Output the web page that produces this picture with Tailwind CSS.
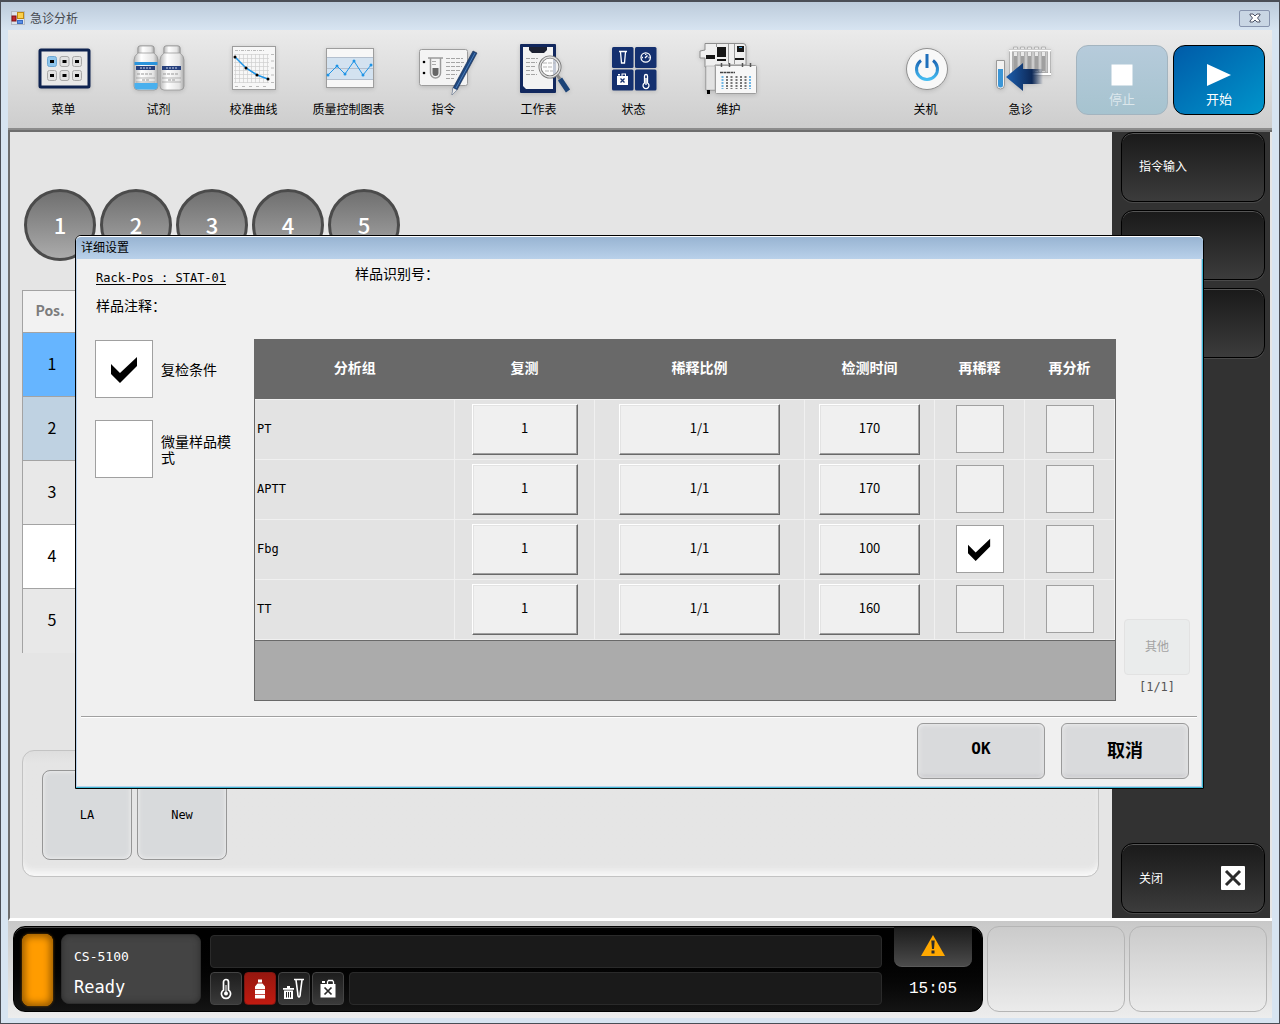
<!DOCTYPE html>
<html lang="zh-CN">
<head>
    <meta charset="UTF-8">
    <meta name="viewport" content="width=device-width, initial-scale=1.0">
    <title>急诊分析</title>
    <script src="https://cdn.jsdelivr.net/npm/@tailwindcss/browser@4"></script>
</head>
<body class="relative flex min-h-screen flex-col bg-[#d7e4f1] font-['Noto_Sans_CJK_SC',sans-serif] text-xs text-black">

    <!-- Title bar -->
    <header class="flex h-[30px] items-center border-x border-t-2 border-[#4a4e56] bg-linear-to-b from-[#bccbdb] to-[#d7e4f1] pt-1 pr-[9px] pl-[10px]">
        <svg class="mr-[5px] h-[14px] w-[14px]" viewBox="0 0 14 14">
            <rect x=".5" y=".5" width="13" height="13" fill="#dde3ea" stroke="#b3bac2"/>
            <rect x="1" y="5" width="4" height="5" fill="#c0272d" stroke="#7e1216"/>
            <rect x="6.500" y="1.500" width="6" height="6" fill="#fbd04a" stroke="#c08a10"/>
            <rect x="6.500" y="9.500" width="5" height="3" fill="#5a8fe8" stroke="#3b6cc0"/>
        </svg>
        <h1 class="text-[#44484e]">急诊分析</h1>
        <button type="button" aria-label="关闭窗口" class="ml-auto flex h-[17px] w-[31px] items-center justify-center rounded-xs border border-[#8794ae] bg-[#c9d6e4]">
            <svg class="h-[10px] w-[12px]" viewBox="0 0 12 10"><path d="M1 1h3l2 2 2-2h3v1L8.500 5 11 8v1H8L6 7 4 9H1V8l2.500-3L1 2z" fill="#fff" stroke="#4c5366"/></svg>
        </button>
    </header>

    <div class="flex flex-1 flex-col border-x border-b border-[#4a4e56] px-[7px] pb-[5px]">

        <!-- Toolbar -->
        <nav class="flex h-[100px] items-start border-b-2 border-[#8c8c8c] bg-linear-to-b from-[#ebebeb] to-[#cdcdcd] pr-[7px] pl-2 leading-[18px]">
            <button type="button" class="flex w-[95px] flex-col items-center pt-[10px]">
                <svg class="h-[60px] w-16 overflow-visible drop-shadow-sm" viewBox="0 0 64 60">
                    <rect x="8" y="10" width="49" height="37" rx="1" fill="#e9e9e9" stroke="#0e2350" stroke-width="3"/>
                    <g fill="#e2e2e2" stroke="#a9a9a9">
                        <rect x="15.500" y="16.500" width="9" height="10" rx="2" fill="#8ec5ec" stroke="#6da8d4"/>
                        <rect x="28" y="16.500" width="9" height="10" rx="2"/><rect x="40.500" y="16.500" width="9" height="10" rx="2"/>
                        <rect x="15.500" y="30.500" width="9" height="10" rx="2"/><rect x="28" y="30.500" width="9" height="10" rx="2"/><rect x="40.500" y="30.500" width="9" height="10" rx="2"/>
                    </g>
                    <path d="M18 20h4v3h-4zM30.500 20h4v3h-4zM43 20h4v3h-4zM18 34h4v3h-4zM30.500 34h4v3h-4zM43 34h4v3h-4z"/>
                </svg>
                <span>菜单</span>
            </button>
            <button type="button" class="flex w-[95px] flex-col items-center pt-[10px]">
                <svg class="h-[60px] w-16 overflow-visible drop-shadow-sm" viewBox="0 0 64 60">
                    <defs>
                        <linearGradient id="bottle"><stop offset="0" stop-color="#b8b8b8"/><stop offset=".3" stop-color="#fff"/><stop offset=".8" stop-color="#e4e4e4"/><stop offset="1" stop-color="#a8a8a8"/></linearGradient>
                    </defs>
                    <g fill="url(#bottle)" stroke="#8f8f8f" stroke-width=".7">
                        <path d="M11 13V8q0-2 2-2h12q2 0 2 2v5q4 3 4 7v26q0 4-4 4H11q-4 0-4-4V20q0-4 4-7z"/>
                        <path d="M11 8q0-2 2-2h12q2 0 2 2v5H11z"/>
                    </g>
                    <g transform="translate(26)" fill="url(#bottle)" stroke="#8f8f8f" stroke-width=".7">
                        <path d="M11 13V8q0-2 2-2h12q2 0 2 2v5q4 3 4 7v26q0 4-4 4H11q-4 0-4-4V20q0-4 4-7z"/>
                        <path d="M11 8q0-2 2-2h12q2 0 2 2v5H11z"/>
                    </g>
                    <path d="M7.500 22h23v3h-23z" fill="#2b94dc"/><path d="M7.500 43h23v3q0 3.500-3.500 3.500H11q-3.500 0-3.500-3.500z" fill="#49b0ee"/>
                    <path d="M9 26h19v4H9zM35 26h19v4H35z" fill="#27407c"/>
                    <path d="M13 28h11M39 28h11" stroke="#cdd6ec" stroke-dasharray="2 1"/>
                    <path d="M10 34h16M36 34h16M15 40h8M41 40h8" stroke="#999" stroke-dasharray="3 1"/><path d="M9 38h19M35 38h19M9 42h19M35 42h19" stroke="#8a8a8a" stroke-width=".6"/>
                </svg>
                <span>试剂</span>
            </button>
            <button type="button" class="flex w-[95px] flex-col items-center pt-[10px]">
                <svg class="h-[60px] w-16 overflow-visible drop-shadow-sm" viewBox="0 0 64 60">
                    <rect x="10.500" y="6.500" width="43" height="43" fill="#f7f7f7" stroke="#9d9d9d"/>
                    <path d="M13 10.500h30" stroke="#bbb" stroke-dasharray="3 1 1 1"/>
                    <path d="M13.500 14v29M17.500 14v29M21.500 14v29M25.500 14v29M29.500 14v29M33.500 14v29M37.500 14v29M41.500 14v29M45.500 14v29M12 14.500h35M12 18.500h35M12 22.500h35M12 26.500h35M12 30.500h35M12 34.500h35M12 38.500h35M12 42.500h35" stroke="#cfcfcf" stroke-width=".7"/>
                    <path d="M49 14.500h3M49 21h3M49 28h3M49 35h3M49 42.500h3M13 46.500h34" stroke="#bbb" stroke-dasharray="3 4"/>
                    <path d="M13 17 24 28 35 35 46 39" fill="none" stroke="#1f94e6" stroke-width="1.500"/>
                    <g><circle cx="13" cy="17" r="1.500"/><circle cx="24" cy="28" r="1.500"/><circle cx="35" cy="35" r="1.500"/><circle cx="46" cy="39" r="1.500"/></g>
                </svg>
                <span>校准曲线</span>
            </button>
            <button type="button" class="flex w-[95px] flex-col items-center pt-[10px]">
                <svg class="h-[60px] w-16 overflow-visible drop-shadow-sm" viewBox="0 0 64 60">
                    <rect x="9.500" y="8.500" width="47" height="39" fill="#f7f7f7" stroke="#9d9d9d"/>
                    <path d="M10 17h46v23H10z" fill="#d3e2f0"/><path d="M10 17.500h46M10 28.500h46M10 39.500h46" stroke="#b3bfce"/>
                    <path d="m11 35 9-9 8 8 9-13 9 14 8-10" fill="none" stroke="#1f94e6"/>
                    <g fill="#1f94e6"><circle cx="11" cy="35" r="1.500"/><circle cx="20" cy="26" r="1.500"/><circle cx="28" cy="34" r="1.500"/><circle cx="37" cy="21" r="1.500"/><circle cx="46" cy="35" r="1.500"/><circle cx="54" cy="25" r="1.500"/></g>
                </svg>
                <span>质量控制图表</span>
            </button>
            <button type="button" class="flex w-[95px] flex-col items-center pt-[10px]">
                <svg class="h-[60px] w-16 overflow-visible drop-shadow-sm" viewBox="0 0 64 60">
                    <rect x="7.500" y="9.500" width="48" height="36" rx="2" fill="#f4f4f4" stroke="#9d9d9d"/>
                    <circle cx="12" cy="22" r="1.300"/><circle cx="12" cy="33" r="1.300"/>
                    <path d="M16 18h15M18.500 18v15a5 5 0 0 0 10 0V18" fill="none" stroke="#9b9b9b" stroke-width="1.500"/>
                    <path d="M20.500 28h6v5a3 3 0 0 1-6 0z" fill="#666"/><path d="M20 21.500h4M20 24.500h4" stroke="#aaa"/>
                    <path d="M34 18.500h17M34 22.500h18M34 26.500h16M34 30.500h14M34 34.500h11M34 38.500h8" stroke="#a5a5a5" stroke-dasharray="4 1"/>
                    <path d="m61 11 4 2-20 37-5 5 1-7z" fill="#1e477f" stroke="#12294d" stroke-width=".6"/><path d="m41 48 4 2-5 5z" fill="#e8e8e8"/><path d="m63 13-19 35" stroke="#4d7eb8"/>
                </svg>
                <span>指令</span>
            </button>
            <button type="button" class="flex w-[95px] flex-col items-center pt-[10px]">
                <svg class="h-[60px] w-16 overflow-visible drop-shadow-sm" viewBox="0 0 64 60">
                    <rect x="13" y="4" width="36" height="49" rx="1" fill="#12285e"/>
                    <path d="M16 7h30v42H19l-3-3z" fill="#f3f3f3"/><path d="M22 7h18v3l-3 3H25l-3-3z" fill="#1d2233"/>
                    <path d="M19 18.500h12M19 22.500h11M19 26.500h10M19 30.500h8M19 34.500h11" stroke="#a5a5a5" stroke-dasharray="4 1"/>
                    <circle cx="43" cy="27" r="10" fill="#fff" fill-opacity=".75" stroke="#777" stroke-width="3"/><circle cx="43" cy="27" r="10" fill="none" stroke="#e0e0e0" stroke-width="1.300"/>
                    <path d="M36 23h12M36 27h10M38 31h8" stroke="#b5b5b5" stroke-dasharray="4 1"/>
                    <path d="m50 35 3 4" stroke="#888" stroke-width="3"/><path d="m53 39 8 12" stroke="#1c4478" stroke-width="5"/>
                </svg>
                <span>工作表</span>
            </button>
            <button type="button" class="flex w-[95px] flex-col items-center pt-[10px]">
                <svg class="h-[60px] w-16 overflow-visible drop-shadow-sm" viewBox="0 0 64 60">
                    <g fill="#14306f"><rect x="10" y="7" width="21.500" height="21" rx="1.500"/><rect x="33" y="7" width="21.500" height="21" rx="1.500"/><rect x="10" y="29.500" width="21.500" height="21" rx="1.500"/><rect x="33" y="29.500" width="21.500" height="21" rx="1.500"/></g>
                    <g fill="none" stroke="#fff" stroke-width="1.300">
                        <path d="M17 11.500h8M18.500 12l1 11h3l1-11"/><circle cx="43.700" cy="17.500" r="4.700"/><path d="m43 18 2.500-2.500M40 17.500h1M46.500 17.500h1M43.700 14v1"/>
                        <path d="M42.500 43v-7a1.500 1.500 0 0 1 3 0v7a3 3 0 1 1-3 0zM44 38v7"/>
                    </g>
                    <path d="M15 36h11v9H15zM16 34h2v1.500h-2zM19.500 36v-2.500H24V36h-1v-1.500h-2.500V36z" fill="#fff"/><path d="m18.500 38.500 4 4m0-4-4 4" stroke="#14306f" stroke-width="1.300"/>
                </svg>
                <span>状态</span>
            </button>
            <button type="button" class="flex w-[95px] flex-col items-center pt-[10px]">
                <svg class="h-[60px] w-16 overflow-visible drop-shadow-sm" viewBox="0 0 64 60">
                    <path d="M8 3.500h38q3 0 3 3V25H18v25H9V27H8V18H3v-7l5-1z" fill="#efefef" stroke="#8d8d8d"/>
                    <path d="M9 26h9v24H9z" fill="#e2e2e2" stroke="#999" stroke-width=".5"/><path d="M10 50h3v4h-3z"/>
                    <path d="M20 7h9v10h-9zM40 6h7v6h-7zM9 15h9v4H9zM20 19h9v2h-9zM38 18h9v2h-9z" fill="#161616"/><path d="M42 7.500h3" stroke="#4aa3dd"/><path d="M19.500 4v3M31.500 4v20M37.500 4v20" stroke="#999"/>
                    <rect x="18.500" y="25.500" width="41" height="28" rx="1" fill="#f7f7f7" stroke="#9d9d9d"/>
                    <path d="M24.500 23v4M32.500 23v4M45.500 23v4M53.500 23v4" stroke="#555" stroke-width="1.500"/>
                    <path d="M23 32.500h15" stroke="#444" stroke-width="1.500" stroke-dasharray="3 .5"/>
                    <path d="M25.500 36v13M53 36v13" stroke="#6db5e4" stroke-width="2" stroke-dasharray="2 1"/>
                    <path d="M30 36v13M34.500 36v13M39.500 36v13M44 36v13M48.500 36v13" stroke="#777" stroke-width="2" stroke-dasharray="2 1"/>
                </svg>
                <span>维护</span>
            </button>
            <button type="button" class="ml-auto flex w-[95px] flex-col items-center pt-[10px]">
                <svg class="h-[60px] w-16 overflow-visible drop-shadow-sm" viewBox="0 0 64 60">
                    <defs><linearGradient id="power" x2="0" y2="1"><stop offset="0" stop-color="#1b66b4"/><stop offset="1" stop-color="#45bdf2"/></linearGradient></defs>
                    <circle cx="33" cy="29" r="20.500" fill="#f8f8f8" stroke="#8f8f8f"/>
                    <path d="M27 20.500a10.500 10.500 0 1 0 12 0" fill="none" stroke="url(#power)" stroke-width="3"/><path d="M31.500 14h3v14h-3z" fill="#1f6fbb"/>
                </svg>
                <span>关机</span>
            </button>
            <button type="button" class="mr-2 flex w-[95px] flex-col items-center pt-[10px]">
                <svg class="h-[60px] w-16 overflow-visible drop-shadow-sm" viewBox="0 0 64 60">
                    <defs><linearGradient id="arrow"><stop offset="0" stop-color="#1d5fae"/><stop offset=".7" stop-color="#0d2958"/><stop offset="1" stop-color="#0d2958" stop-opacity="0"/></linearGradient></defs>
                    <g fill="#e9e9e9" stroke="#a0a0a0" stroke-width=".7"><path d="M24.500 7h4v25h-4zM31.500 7h4v25h-4zM38.500 7h4v25h-4zM45.500 7h4v25h-4zM52.500 7h4v25h-4z"/></g>
                    <path d="M25 16h3v15h-3zM32 16h3v15h-3zM39 16h3v15h-3zM46 16h3v15h-3zM53 16h3v15h-3z" fill="#a0a0a0"/>
                    <path d="M20 10.500h42M22 34h40M22 10v24M60 10v24" stroke="#999" stroke-width="3"/><path d="M20 10.500h42M22 34h40M22 10v24M60 10v24" stroke="#fff" stroke-width="1.800"/>
                    <path d="M7.500 20.500h8V45q0 4-4 4t-4-4z" fill="#f2f2f2" stroke="#999"/><path d="M9 29h5v16q0 2.500-2.500 2.500T9 45z" fill="#3c96d6"/>
                    <path d="m17 37 17-14v6h20v15H34v7z" fill="url(#arrow)"/>
                </svg>
                <span>急诊</span>
            </button>
            <button type="button" disabled class="mt-[15px] mr-[5px] flex h-[70px] w-[92px] flex-col items-center rounded-xl border border-[#a3b4bf] bg-linear-to-b from-[#b6cbdb] to-[#a6c3cf] pt-[18px] text-white/60">
                <svg class="mb-1 h-[22px] w-[22px]" viewBox="0 0 22 22"><path d="M.500.500h21v21H.500z" fill="#fff"/></svg>
                <span class="text-[13px]">停止</span>
            </button>
            <button type="button" class="mt-[15px] flex h-[70px] w-[92px] flex-col items-center rounded-xl border border-black bg-linear-to-br from-[#005ba8] to-[#0095cb] pt-[18px] text-white">
                <svg class="mb-1 h-[22px] w-[26px]" viewBox="0 0 26 22"><path d="M1 0v22l24-11z" fill="#fff"/></svg>
                <span class="text-[13px]">开始</span>
            </button>
        </nav>

        <!-- Sample area and side menu -->
        <div class="flex flex-1 border-t-2 border-b-[3px] border-l-2 border-t-[#6e6e6e] border-b-white border-l-[#6e6e6e] bg-[#e5e5e5]">
            <main class="flex flex-1 flex-col pt-[57px] pr-[13px] pb-[41px] pl-3">
                <ol class="ml-[2px] flex gap-1 text-[22px] font-medium text-white">
                    <li class="flex h-18 w-18 items-center justify-center rounded-full border-3 border-[#4b4b4b] bg-linear-to-b from-[#707070] to-[#ababab]">1</li>
                    <li class="flex h-18 w-18 items-center justify-center rounded-full border-3 border-[#4b4b4b] bg-linear-to-b from-[#707070] to-[#ababab]">2</li>
                    <li class="flex h-18 w-18 items-center justify-center rounded-full border-3 border-[#4b4b4b] bg-linear-to-b from-[#707070] to-[#ababab]">3</li>
                    <li class="flex h-18 w-18 items-center justify-center rounded-full border-3 border-[#4b4b4b] bg-linear-to-b from-[#707070] to-[#ababab]">4</li>
                    <li class="flex h-18 w-18 items-center justify-center rounded-full border-3 border-[#4b4b4b] bg-linear-to-b from-[#707070] to-[#ababab]">5</li>
                </ol>
                <table class="mt-[29px] w-[60px] border-collapse text-center text-base">
                    <thead>
                        <tr class="h-[42px]"><th class="border border-[#a3a3a3] bg-[#f2f2f2] p-0 pr-1 pb-[3px] text-sm text-[#7c7c7c]">Pos.</th></tr>
                    </thead>
                    <tbody>
                        <tr class="h-16"><td class="border border-[#a3a3a3] bg-[#66b5ff] p-0 pb-1">1</td></tr>
                        <tr class="h-16"><td class="border border-[#a3a3a3] bg-[#bfd2e2] p-0 pb-1">2</td></tr>
                        <tr class="h-16"><td class="border border-[#a3a3a3] bg-[#e8e8e8] p-0 pb-1">3</td></tr>
                        <tr class="h-16"><td class="border border-[#a3a3a3] bg-white p-0 pb-1">4</td></tr>
                        <tr class="h-16"><td class="border-x border-[#a3a3a3] bg-[#e8e8e8] p-0 pb-1">5</td></tr>
                    </tbody>
                </table>
                <div class="mt-auto flex h-[127px] gap-[5px] rounded-xl border border-[#c3c3c3] bg-linear-to-b from-[#dedede] via-[#e5e5e5] via-10% to-[#e5e5e5] px-[19px] pt-[19px] font-['DejaVu_Sans_Mono',monospace] shadow-[inset_0_-8px_6px_-3px_#f8f8f8]">
                    <button type="button" class="h-[90px] w-[90px] rounded-lg border border-[#969696] bg-[#d8dadc] shadow-[inset_0_0_5px_#f2f2f2]">LA</button>
                    <button type="button" class="h-[90px] w-[90px] rounded-lg border border-[#969696] bg-[#d8dadc] shadow-[inset_0_0_5px_#f2f2f2]">New</button>
                </div>
            </main>
            <aside class="mr-[2px] flex w-[158px] flex-col gap-2 bg-[#323232] pr-[5px] pb-[5px] pl-[9px] text-white">
                <button type="button" class="h-[70px] rounded-xl border border-black bg-linear-to-b from-[#1a1a1a] to-[#3c3c3c] px-[17px] pb-[2px] text-left shadow-[inset_0_1px_0_#555,0_1px_0_#4a4a4a]">指令输入</button>
                <button type="button" aria-label="空" class="h-[70px] rounded-xl border border-black bg-linear-to-b from-[#1a1a1a] to-[#3c3c3c] shadow-[inset_0_1px_0_#555,0_1px_0_#4a4a4a]"></button>
                <button type="button" aria-label="空" class="h-[70px] rounded-xl border border-black bg-linear-to-b from-[#1a1a1a] to-[#3c3c3c] shadow-[inset_0_1px_0_#555,0_1px_0_#4a4a4a]"></button>
                <button type="button" class="mt-auto flex h-[70px] items-center justify-between rounded-xl border border-black bg-linear-to-b from-[#1a1a1a] to-[#3c3c3c] pr-[19px] pl-[17px] shadow-[inset_0_1px_0_#555,0_1px_0_#4a4a4a]">
                    关闭
                    <svg class="h-6 w-6" viewBox="0 0 24 24"><rect width="24" height="24" rx="1" fill="#fff"/><path d="m5 5 14 14M19 5 5 19" stroke="#2b2b2b" stroke-width="3"/></svg>
                </button>
            </aside>
        </div>

        <!-- Device status -->
        <footer class="flex gap-1 bg-linear-to-b from-[#c8c8c8] to-[#ededed] pt-[5px] pr-[5px] pb-[6px] pl-[5px]">
            <div class="flex h-[86px] flex-1 rounded-xl border border-black bg-linear-to-b from-black to-[#141414] pr-[10px] pl-2 text-white shadow-[inset_0_1px_0_#444]">
                <div class="mt-[7px] h-[72px] w-[31px] rounded-lg bg-[#ff9c00] shadow-[inset_0_0_7px_3px_#9a5c00,0_0_3px_#7a4a00]"></div>
                <div class="mt-[7px] ml-2 flex h-[70px] w-[140px] flex-col justify-between rounded-lg border border-[#2e2e2e] bg-[#444] pt-[14px] pb-2 pl-3 font-['DejaVu_Sans_Mono',monospace] shadow-[inset_0_0_6px_#2e2e2e]">
                    <span class="text-[13px] leading-4">CS-5100</span>
                    <span class="text-[17px] leading-4">Ready</span>
                </div>
                <div class="mt-2 ml-[9px] flex flex-1 flex-col gap-1">
                    <div class="h-[33px] rounded border border-[#2a2a2a] bg-[#1a1a1a]"></div>
                    <div class="flex h-[33px] gap-[2px]">
                        <button type="button" aria-label="温度" class="flex w-8 items-center justify-center rounded-sm border border-[#444] bg-linear-to-b from-[#1e1e1e] to-[#3a3a3a]">
                            <svg class="h-6 w-6" viewBox="0 0 24 24"><path d="M9.500 13V5a2.500 2.500 0 0 1 5 0v8a4.600 4.600 0 1 1-5 0z" fill="none" stroke="#fff" stroke-width="1.700"/><path d="M12 8v8" stroke="#fff"/><circle cx="12" cy="16.500" r="2" fill="#fff"/></svg>
                        </button>
                        <button type="button" aria-label="试剂报警" class="flex w-8 items-center justify-center rounded-sm border border-[#7d1612] bg-linear-to-b from-[#97170f] to-[#c01a10]">
                            <svg class="h-6 w-6" viewBox="0 0 24 24"><path d="M10 2.500h4v3h-4zM9.500 6.500h5l2.500 3V12H7V9.500zM7 12.700h10v4.600H7zM7 18h10v3.500H7z" fill="#fff"/></svg>
                        </button>
                        <button type="button" aria-label="废弃" class="flex w-8 items-center justify-center rounded-sm border border-[#444] bg-linear-to-b from-[#1e1e1e] to-[#3a3a3a]">
                            <svg class="h-6 w-6" viewBox="0 0 24 24"><path d="M1 11h11v1.700H1zM5 9h3v2H5zM2 13.500h9V22H2z" fill="#fff"/><path d="M4.500 15v5.500M6.500 15v5.500M8.500 15v5.500" stroke="#2a2a2a"/><path d="M12 2.500h10M14 3l1.700 13q0 4 1.300 4t1.300-4L20 3" fill="none" stroke="#fff" stroke-width="1.600"/></svg>
                        </button>
                        <button type="button" aria-label="废液" class="flex w-8 items-center justify-center rounded-sm border border-[#444] bg-linear-to-b from-[#1e1e1e] to-[#3a3a3a]">
                            <svg class="h-6 w-6" viewBox="0 0 24 24"><path d="M4.500 7h15v13.500h-15zM6 4h3v2H6z" fill="#fff"/><path d="M11.500 7V5l1-1.500h4l1 1.500v2" fill="none" stroke="#fff" stroke-width="1.300"/><path d="m8.500 10.500 7 7m0-7-7 7" stroke="#2a2a2a" stroke-width="1.700"/></svg>
                        </button>
                        <div class="ml-[3px] flex-1 rounded border border-[#2a2a2a] bg-[#1a1a1a]"></div>
                    </div>
                </div>
                <div class="ml-3 flex w-[78px] flex-col items-center">
                    <button type="button" aria-label="报警" class="flex h-10 w-full justify-center rounded-b-lg border-b border-[#5a5a5a] bg-linear-to-b from-[#1c1c1c] to-[#4b4b4b] pt-2">
                        <svg class="h-[21px] w-6" viewBox="0 0 24 21"><path d="M12 0 24 21H0z" fill="#ffa800"/><path d="M10.300 5.500h3.400L13 14h-2zM10.500 15.500h3v3h-3z" fill="#2b2b2b"/></svg>
                    </button>
                    <time class="mt-[10px] font-['Liberation_Mono',monospace] text-base leading-6">15:05</time>
                </div>
            </div>
            <div class="h-[86px] w-[138px] rounded-xl border border-[#b5b5b5] bg-linear-to-b from-[#cbcbcb] to-[#ebebeb]"></div>
            <div class="h-[86px] w-[138px] rounded-xl border border-[#b5b5b5] bg-linear-to-b from-[#cbcbcb] to-[#ebebeb]"></div>
        </footer>
    </div>

    <!-- Detail settings dialog -->
    <section role="dialog" aria-labelledby="dialog-title" class="absolute top-[235px] right-[76px] left-[75px] flex flex-col rounded-t-md border border-black bg-[#f0f0f0] text-sm shadow-[inset_-1px_-1px_0_#3fb8d4,inset_-2px_-2px_0_#b9d1ea,inset_1px_0_0_#b9d1ea]">
        <h2 id="dialog-title" class="h-[23px] rounded-t-[5px] border-t border-white bg-linear-to-b from-[#98b4d2] to-[#b9d1ea] pl-[5px] text-xs leading-5">详细设置</h2>

        <div class="flex pt-1 pl-5 leading-5">
            <div class="w-[259px]">
                <p class="pt-[5px] font-['DejaVu_Sans_Mono',monospace] text-xs leading-5 underline underline-offset-2">Rack-Pos : STAT-01</p>
                <p class="mt-[7px]">样品注释：</p>
            </div>
            <p>样品识别号：</p>
        </div>

        <div class="mt-6 flex pl-[19px]">
            <div class="flex w-[159px] flex-col gap-[22px] pt-px">
                <label class="flex items-center gap-2 leading-4">
                    <span class="grid shrink-0">
                        <input type="checkbox" checked class="peer col-start-1 row-start-1 h-[58px] w-[58px] appearance-none border border-[#a0a0a0] bg-white">
                        <svg class="pointer-events-none invisible col-start-1 row-start-1 h-[27px] w-[27px] place-self-center peer-checked:visible" viewBox="0 0 27 27"><path d="M0 8v10l9 9 17-17V1L9 17z"/></svg>
                    </span>
                    复检条件
                </label>
                <label class="flex items-center gap-2 leading-4">
                    <span class="grid shrink-0">
                        <input type="checkbox" class="peer col-start-1 row-start-1 h-[58px] w-[58px] appearance-none border border-[#a0a0a0] bg-white">
                        <svg class="pointer-events-none invisible col-start-1 row-start-1 h-[27px] w-[27px] place-self-center peer-checked:visible" viewBox="0 0 27 27"><path d="M0 8v10l9 9 17-17V1L9 17z"/></svg>
                    </span>
                    <span class="w-[74px]">微量样品模式</span>
                </label>
            </div>

            <div class="h-[362px] flex-1 border border-[#696969] bg-[#ababab]">
                <table class="w-full table-fixed border-collapse bg-[#e3e3e3]">
                    <colgroup>
                        <col><col class="w-[140px]"><col class="w-[210px]"><col class="w-[130px]"><col class="w-[90px]"><col class="w-[90px]">
                    </colgroup>
                    <thead>
                        <tr class="h-[59px] bg-[#696969] text-white">
                            <th class="p-0 pb-1">分析组</th>
                            <th class="p-0 pb-1">复测</th>
                            <th class="p-0 pb-1">稀释比例</th>
                            <th class="p-0 pb-1">检测时间</th>
                            <th class="p-0 pb-1">再稀释</th>
                            <th class="p-0 pb-1">再分析</th>
                        </tr>
                    </thead>
                    <tbody id="analysis-rows"></tbody>
                </table>
                <div class="border-t border-[#696969]"></div>
            </div>

            <div class="flex w-[87px] flex-col justify-end pl-2 font-['DejaVu_Sans_Mono','Noto_Sans_CJK_SC',monospace] text-xs text-[#555]">
                <button type="button" disabled class="h-14 w-[66px] rounded border border-[#e2e2e2] bg-[#eaecec] text-[#a3a3a3]">其他</button>
                <p class="mb-1 w-[66px] pt-[2px] text-center leading-5">[1/1]</p>
            </div>
        </div>

        <div class="mt-[15px] mr-[6px] ml-[5px] border-t border-b border-t-[#a0a0a0] border-b-white"></div>
        <div class="flex justify-end gap-4 pt-[5px] pr-[14px] pb-[9px] font-bold">
            <button type="button" class="h-14 w-32 rounded-md border border-[#9a9a9a] bg-[#d9dadc] pb-1 font-['DejaVu_Sans_Mono',monospace] text-base shadow-[inset_0_0_5px_#f4f4f4,inset_0_-3px_3px_#c2c2c6]">OK</button>
            <button type="button" class="h-14 w-32 rounded-md border border-[#9a9a9a] bg-[#d9dadc] pb-1 text-lg shadow-[inset_0_0_5px_#f4f4f4,inset_0_-3px_3px_#c2c2c6]">取消</button>
        </div>
    </section>

    <script>
        const rows = [
            { name: 'PT', repeat: '1', ratio: '1/1', time: '170', redilute: false },
            { name: 'APTT', repeat: '1', ratio: '1/1', time: '170', redilute: false },
            { name: 'Fbg', repeat: '1', ratio: '1/1', time: '100', redilute: true },
            { name: 'TT', repeat: '1', ratio: '1/1', time: '160', redilute: false }
        ];

        const cell = 'border border-[#f0f0f0] p-0 text-center';
        const button = 'h-[51px] border border-t-white border-l-white border-r-[#696969] border-b-[#696969] bg-[#f0f0f0] pb-[2px] align-middle text-[13px] shadow-[inset_-1px_-1px_0_#a0a0a0,inset_1px_1px_0_#e3e3e3]';

        // Tick box with its own check mark drawn over it
        function checkbox(label, checked) {
            return `<span class="inline-grid align-middle">
                <input type="checkbox" aria-label="${label}" ${checked ? 'checked' : ''} class="peer col-start-1 row-start-1 h-12 w-12 appearance-none border border-[#a0a0a0] bg-[#f0f0f0] checked:bg-white">
                <svg class="pointer-events-none invisible col-start-1 row-start-1 h-[23px] w-[23px] place-self-center peer-checked:visible" viewBox="0 0 27 27"><path d="M0 8v10l9 9 17-17V1L9 17z"/></svg>
            </span>`;
        }

        document.getElementById('analysis-rows').innerHTML = rows.map(row => `
            <tr class="h-[60px]">
                <td class="border border-l-0 border-[#f0f0f0] p-0 pl-[2px] font-['DejaVu_Sans_Mono',monospace] text-xs">${row.name}</td>
                <td class="${cell}"><button type="button" class="${button} w-[106px]">${row.repeat}</button></td>
                <td class="${cell}"><button type="button" class="${button} w-[161px]">${row.ratio}</button></td>
                <td class="${cell}"><button type="button" class="${button} w-[101px]">${row.time}</button></td>
                <td class="${cell}">${checkbox(row.name + ' 再稀释', row.redilute)}</td>
                <td class="${cell}">${checkbox(row.name + ' 再分析', false)}</td>
            </tr>`).join('');
    </script>
</body>
</html>
